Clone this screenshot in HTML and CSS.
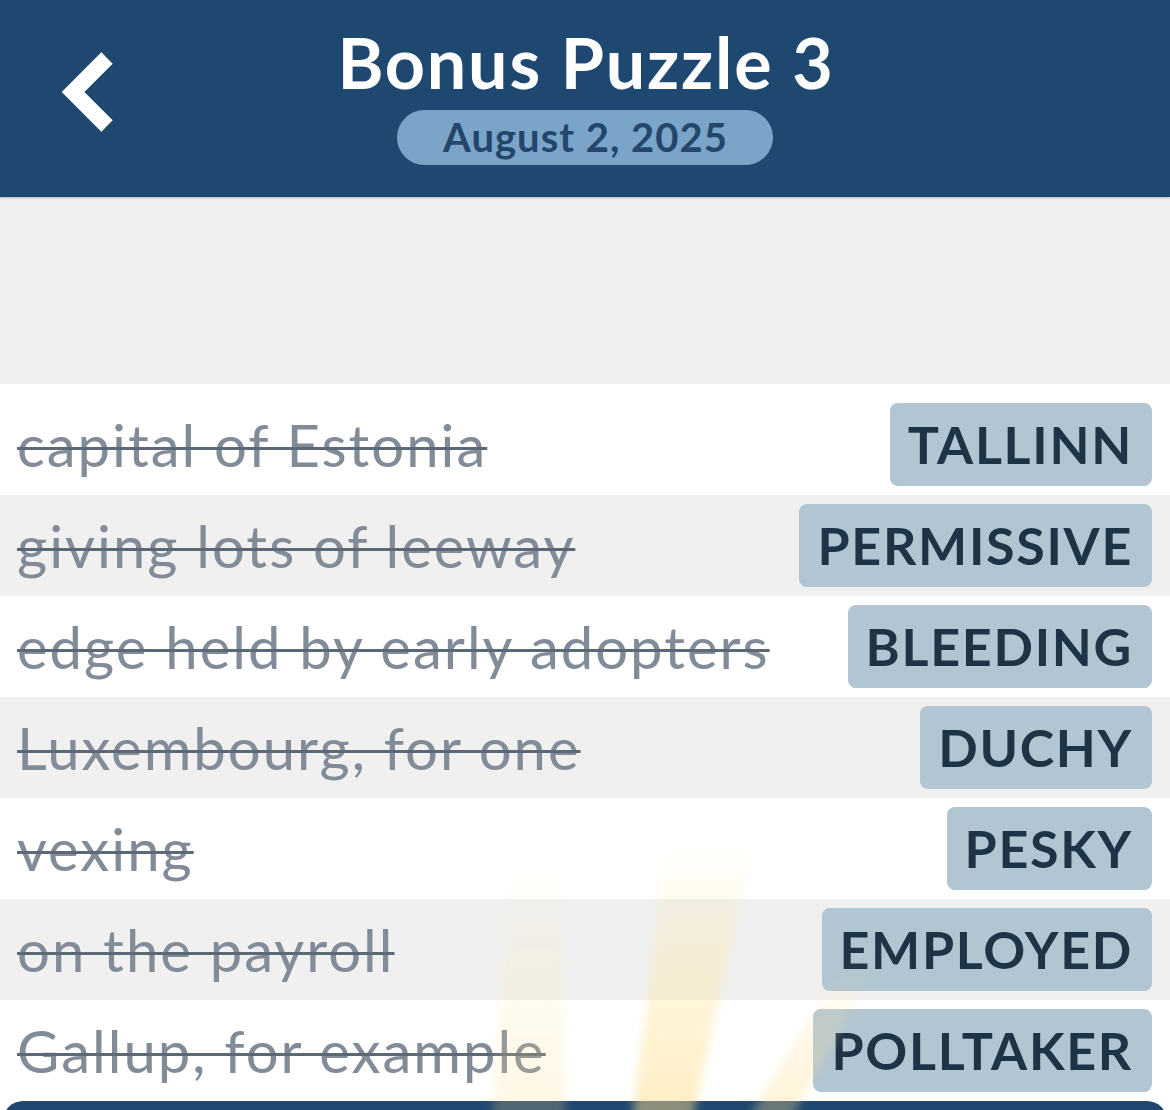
FILE: index.html
```html
<!DOCTYPE html>
<html lang="en">
<head>
    <meta charset="UTF-8">
    <meta name="viewport" content="width=device-width, initial-scale=1.0">
    <title>Bonus Puzzle 3</title>
    <link rel="stylesheet" href="styles.css">
</head>
<body>
    <div class="screen">
        <header class="top-bar">
            <button class="back-btn" aria-label="Back">
                <svg width="80" height="110" viewBox="40 37 80 110">
                    <polyline points="107,58 73,92 107,126" fill="none" stroke="#fff" stroke-width="16" stroke-linejoin="miter"/>
                </svg>
            </button>
            <div class="title-block">
                <h1>Bonus Puzzle 3</h1>
                <div class="date-pill">August 2, 2025</div>
            </div>
            <div></div>
        </header>

        <div class="spacer"></div>

        <ul class="clue-list">
            <li class="clue-row">
                <span class="clue solved">capital of Estonia</span>
                <span class="answer">TALLINN</span>
            </li>
            <li class="clue-row">
                <span class="clue solved">giving lots of leeway</span>
                <span class="answer">PERMISSIVE</span>
            </li>
            <li class="clue-row">
                <span class="clue solved">edge held by early adopters</span>
                <span class="answer">BLEEDING</span>
            </li>
            <li class="clue-row">
                <span class="clue solved">Luxembourg, for one</span>
                <span class="answer">DUCHY</span>
            </li>
            <li class="clue-row">
                <span class="clue solved">vexing</span>
                <span class="answer">PESKY</span>
            </li>
            <li class="clue-row">
                <span class="clue solved">on the payroll</span>
                <span class="answer">EMPLOYED</span>
            </li>
            <li class="clue-row">
                <span class="clue solved">Gallup, for example</span>
                <span class="answer">POLLTAKER</span>
            </li>
        </ul>

        <div class="bottom-bar"></div>

        <svg class="rays" width="1170" height="300" viewBox="0 810 1170 300">
            <defs>
                <linearGradient id="rayFade" x1="0" y1="0" x2="0" y2="1">
                    <stop offset="0" stop-color="#ffe9a0" stop-opacity="0"/>
                    <stop offset="0.4" stop-color="#ffe49c" stop-opacity="0.3"/>
                    <stop offset="1" stop-color="#ffdc85" stop-opacity="0.5"/>
                </linearGradient>
                <filter id="soft" x="-20%" y="-20%" width="140%" height="140%">
                    <feGaussianBlur stdDeviation="5"/>
                </filter>
            </defs>
            <g filter="url(#soft)">
                <polygon points="512,850 560,850 566,1120 492,1120" fill="url(#rayFade)" opacity="0.45"/>
                <polygon points="668,835 755,835 692,1120 632,1120" fill="url(#rayFade)"/>
                <polygon points="845,960 880,960 790,1120 748,1120" fill="url(#rayFade)" opacity="0.7"/>
            </g>
        </svg>
    </div>
</body>
</html>
```

FILE: styles.css
```css
* {
    box-sizing: border-box;
}
html, body {
    margin: 0;
    padding: 0;
}
body {
    font-family: Lato, "Open Sans", sans-serif;
    background-color: #ffffff;
}
.screen {
    position: relative;
    width: 1170px;
    height: 1110px;
    overflow: hidden;
    display: flex;
    flex-direction: column;
}
.screen > * {
    flex-shrink: 0;
}
.top-bar {
    height: 197px;
    background-color: #1f4870;
    display: grid;
    grid-template-columns: 1fr auto 1fr;
    align-items: start;
    box-shadow: 0 1px 2px rgba(0,0,0,0.25);
    z-index: 1;
}
.back-btn {
    background: none;
    border: none;
    padding: 0;
    margin: 37px 0 0 40px;
    width: 80px;
    height: 110px;
    justify-self: start;
    cursor: pointer;
}
.title-block {
    display: flex;
    flex-direction: column;
    align-items: center;
    padding-top: 22px;
}
.title-block h1 {
    margin: 0 -2px 0 0;
    color: #ffffff;
    font-size: 70px;
    font-weight: 700;
    letter-spacing: 1.8px;
    line-height: 80px;
}
.date-pill {
    margin-top: 8px;
    height: 55px;
    padding: 0 45px 0 46px;
    border-radius: 28px;
    background-color: #7aa4c8;
    color: #24466a;
    font-size: 40px;
    font-weight: 700;
    letter-spacing: 1px;
    line-height: 55px;
}
.spacer {
    height: 187px;
    background-color: #f0f0f0;
}
.clue-list {
    list-style: none;
    margin: 0;
    padding: 10px 0 0 0;
    background-color: #ffffff;
}
.clue-row {
    display: flex;
    justify-content: space-between;
    align-items: center;
    height: 101px;
    padding: 0 18px 0 17px;
}
.clue-row:nth-child(even) {
    background-color: #f0f0f0;
}
.clue {
    font-size: 58px;
    letter-spacing: 2px;
    color: #818c98;
    white-space: nowrap;
}
.clue.solved {
    text-decoration: line-through;
    text-decoration-color: #5c6875;
    text-decoration-thickness: 3px;
}
.answer {
    height: 83px;
    padding: 0 19px 0 18px;
    border-radius: 8px;
    background-color: #b1c5d3;
    color: #1f3347;
    font-size: 52px;
    font-weight: 700;
    letter-spacing: 1.7px;
    line-height: 83px;
    white-space: nowrap;
}
.bottom-bar {
    height: 40px;
    margin: 0 3px;
    background-color: #1f4870;
    border-radius: 20px 20px 0 0;
}
.rays {
    position: absolute;
    left: 0;
    bottom: 0;
    pointer-events: none;
}
```
